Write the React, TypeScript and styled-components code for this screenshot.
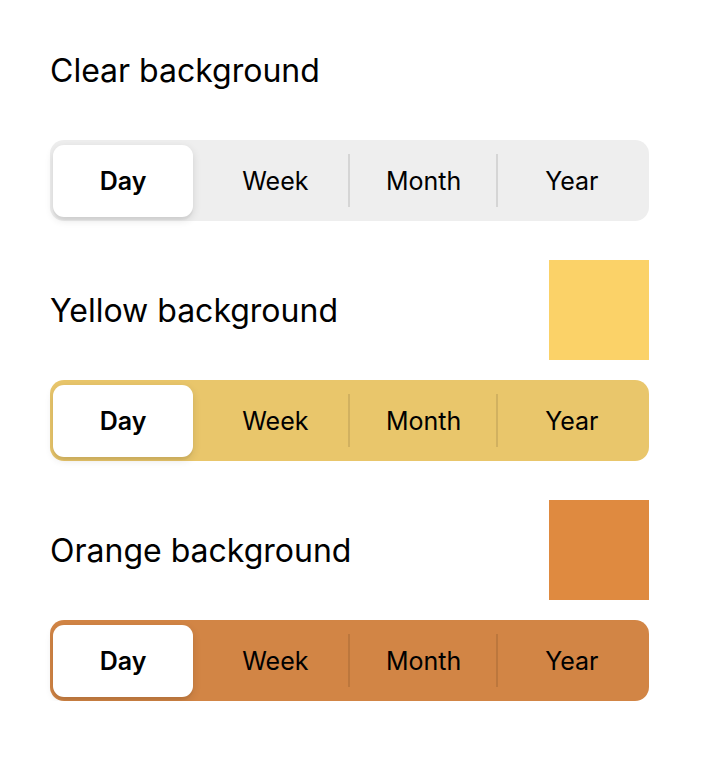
import styled, { createGlobalStyle } from "styled-components";

const GlobalStyle = createGlobalStyle`
  body {
    margin: 0;
    background: #ffffff;
    font-family: Inter, "Noto Sans", sans-serif;
    color: #000000;
  }
`;

const segments = ["Day", "Week", "Month", "Year"];

type Variant = {
  title: string;
  swatch?: string;
  track: string;
};

const variants: Variant[] = [
  { title: "Clear background", track: "#eeeeee" },
  { title: "Yellow background", swatch: "#fbd268", track: "#e9c66b" },
  { title: "Orange background", swatch: "#df8a40", track: "#d28545" },
];

const SegmentedControl = ({ track }: { track: string }) => (
  <Track $bg={track}>
    {segments.map((label, i) => (
      <Segment key={label} $divider={i > 1}>
        {i === 0 ? <Selected>{label}</Selected> : label}
      </Segment>
    ))}
  </Track>
);

const App = () => {
  return (
    <>
      <GlobalStyle />
      <Page>
        {variants.map((v) => (
          <Section key={v.title}>
            <Header>
              <Title>{v.title}</Title>
              {v.swatch && <Swatch $color={v.swatch} />}
            </Header>
            <SegmentedControl track={v.track} />
          </Section>
        ))}
      </Page>
    </>
  );
};
export default App;

const Page = styled.main`
  width: 708px;
  padding: 20px 59px 0 50px;
  box-sizing: border-box;
  display: flex;
  flex-direction: column;
  gap: 39px;
`;

const Section = styled.section`
  display: flex;
  flex-direction: column;
  gap: 20px;
`;

const Header = styled.div`
  height: 100px;
  display: flex;
  align-items: center;
  justify-content: space-between;
`;

const Title = styled.h2`
  margin: 0;
  font-size: 32px;
  font-weight: 400;
  letter-spacing: 0;
`;

const Swatch = styled.div<{ $color: string }>`
  width: 100px;
  height: 100px;
  background-color: ${({ $color }) => $color};
`;

const Track = styled.div<{ $bg: string }>`
  height: 81px;
  padding: 4px 3px;
  box-sizing: border-box;
  border-radius: 14px;
  background-color: ${({ $bg }) => $bg};
  display: grid;
  grid-template-columns: repeat(4, 1fr);
`;

const Segment = styled.div<{ $divider: boolean }>`
  position: relative;
  display: flex;
  align-items: center;
  justify-content: center;
  padding-top: 1px;
  font-size: 25px;
  font-weight: 400;

  &::before {
    content: "";
    display: ${({ $divider }) => ($divider ? "block" : "none")};
    position: absolute;
    left: -2px;
    top: 10px;
    bottom: 10px;
    width: 2px;
    background-color: rgba(0, 0, 0, 0.1);
  }
`;

const Selected = styled.div`
  align-self: stretch;
  width: 140px;
  margin-right: 8px;
  display: flex;
  align-items: center;
  justify-content: center;
  background-color: #ffffff;
  border-radius: 11px;
  font-weight: 600;
  box-shadow: 0 3px 8px rgba(0, 0, 0, 0.12), 0 3px 1px rgba(0, 0, 0, 0.04);
`;
